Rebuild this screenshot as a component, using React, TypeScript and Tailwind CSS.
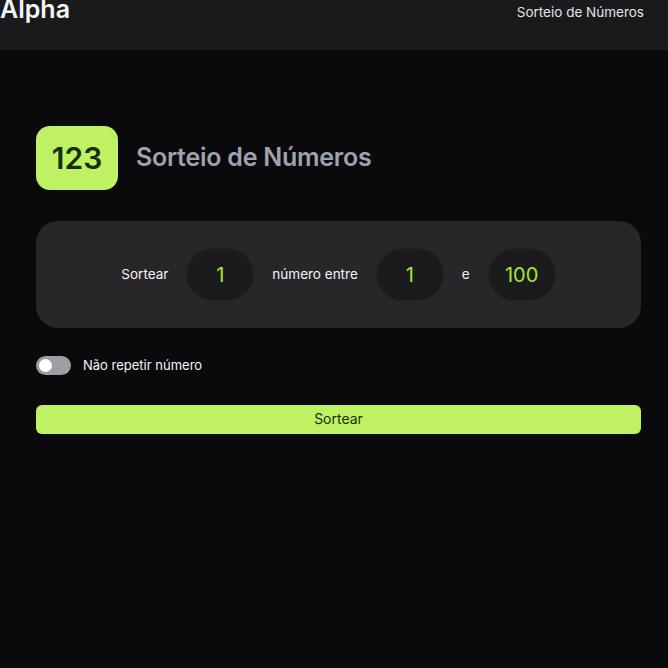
import React from "react";

const font = { fontFamily: "Inter, 'Noto Sans', sans-serif" };

const Pill = ({ value }: { value: string }) => (
  <div className="flex h-[53px] w-[68px] items-center justify-center rounded-full border border-[#222224] bg-[#1b1b1d] text-[20px] text-[#a3e635]">
    {value}
  </div>
);

const App = () => {
  return (
    <div className="min-h-[668px] w-full bg-[#0a0a0c] text-white" style={font}>
      <header className="flex h-[50px] items-start justify-between bg-[#1a1a1c] pr-6">
        <span className="-mt-[3px] text-[25px] font-semibold leading-6 text-[#f4f4f5]">Alpha</span>
        <nav className="mt-[2px] text-[13.5px] leading-5 text-[#e4e4e7]">Sorteio de Números</nav>
      </header>

      <main className="pl-9 pr-[27px] pt-[76px]">
        <div className="flex items-center gap-[18px]">
          <div className="flex h-16 w-[82px] items-center justify-center rounded-[14px] bg-[#bef264] text-[30px] font-semibold text-[#1a2e05]">
            123
          </div>
          <h1 className="text-[25px] font-semibold tracking-[-0.01em] text-[#9ca3af]">Sorteio de Números</h1>
        </div>

        <section className="mt-[31px] flex h-[107px] items-center justify-center gap-[18px] rounded-[22px] bg-[#27272a] text-[13.5px] text-[#f4f4f5]">
          <span>Sortear</span>
          <Pill value="1" />
          <span>número entre</span>
          <Pill value="1" />
          <span>e</span>
          <Pill value="100" />
        </section>

        <label className="mt-[28px] flex items-center gap-3 text-[13px] text-[#f4f4f5]">
          <span className="flex h-[19px] w-[35px] items-center rounded-full bg-[#9d9ea3] px-[3px]">
            <span className="h-[13px] w-[13px] rounded-full bg-white" />
          </span>
          Não repetir número
        </label>

        <button className="mt-[29px] h-[29px] w-full rounded-md bg-[#bef264] text-sm text-[#1a2e05]">
          Sortear
        </button>
      </main>
    </div>
  );
};

export default App;
